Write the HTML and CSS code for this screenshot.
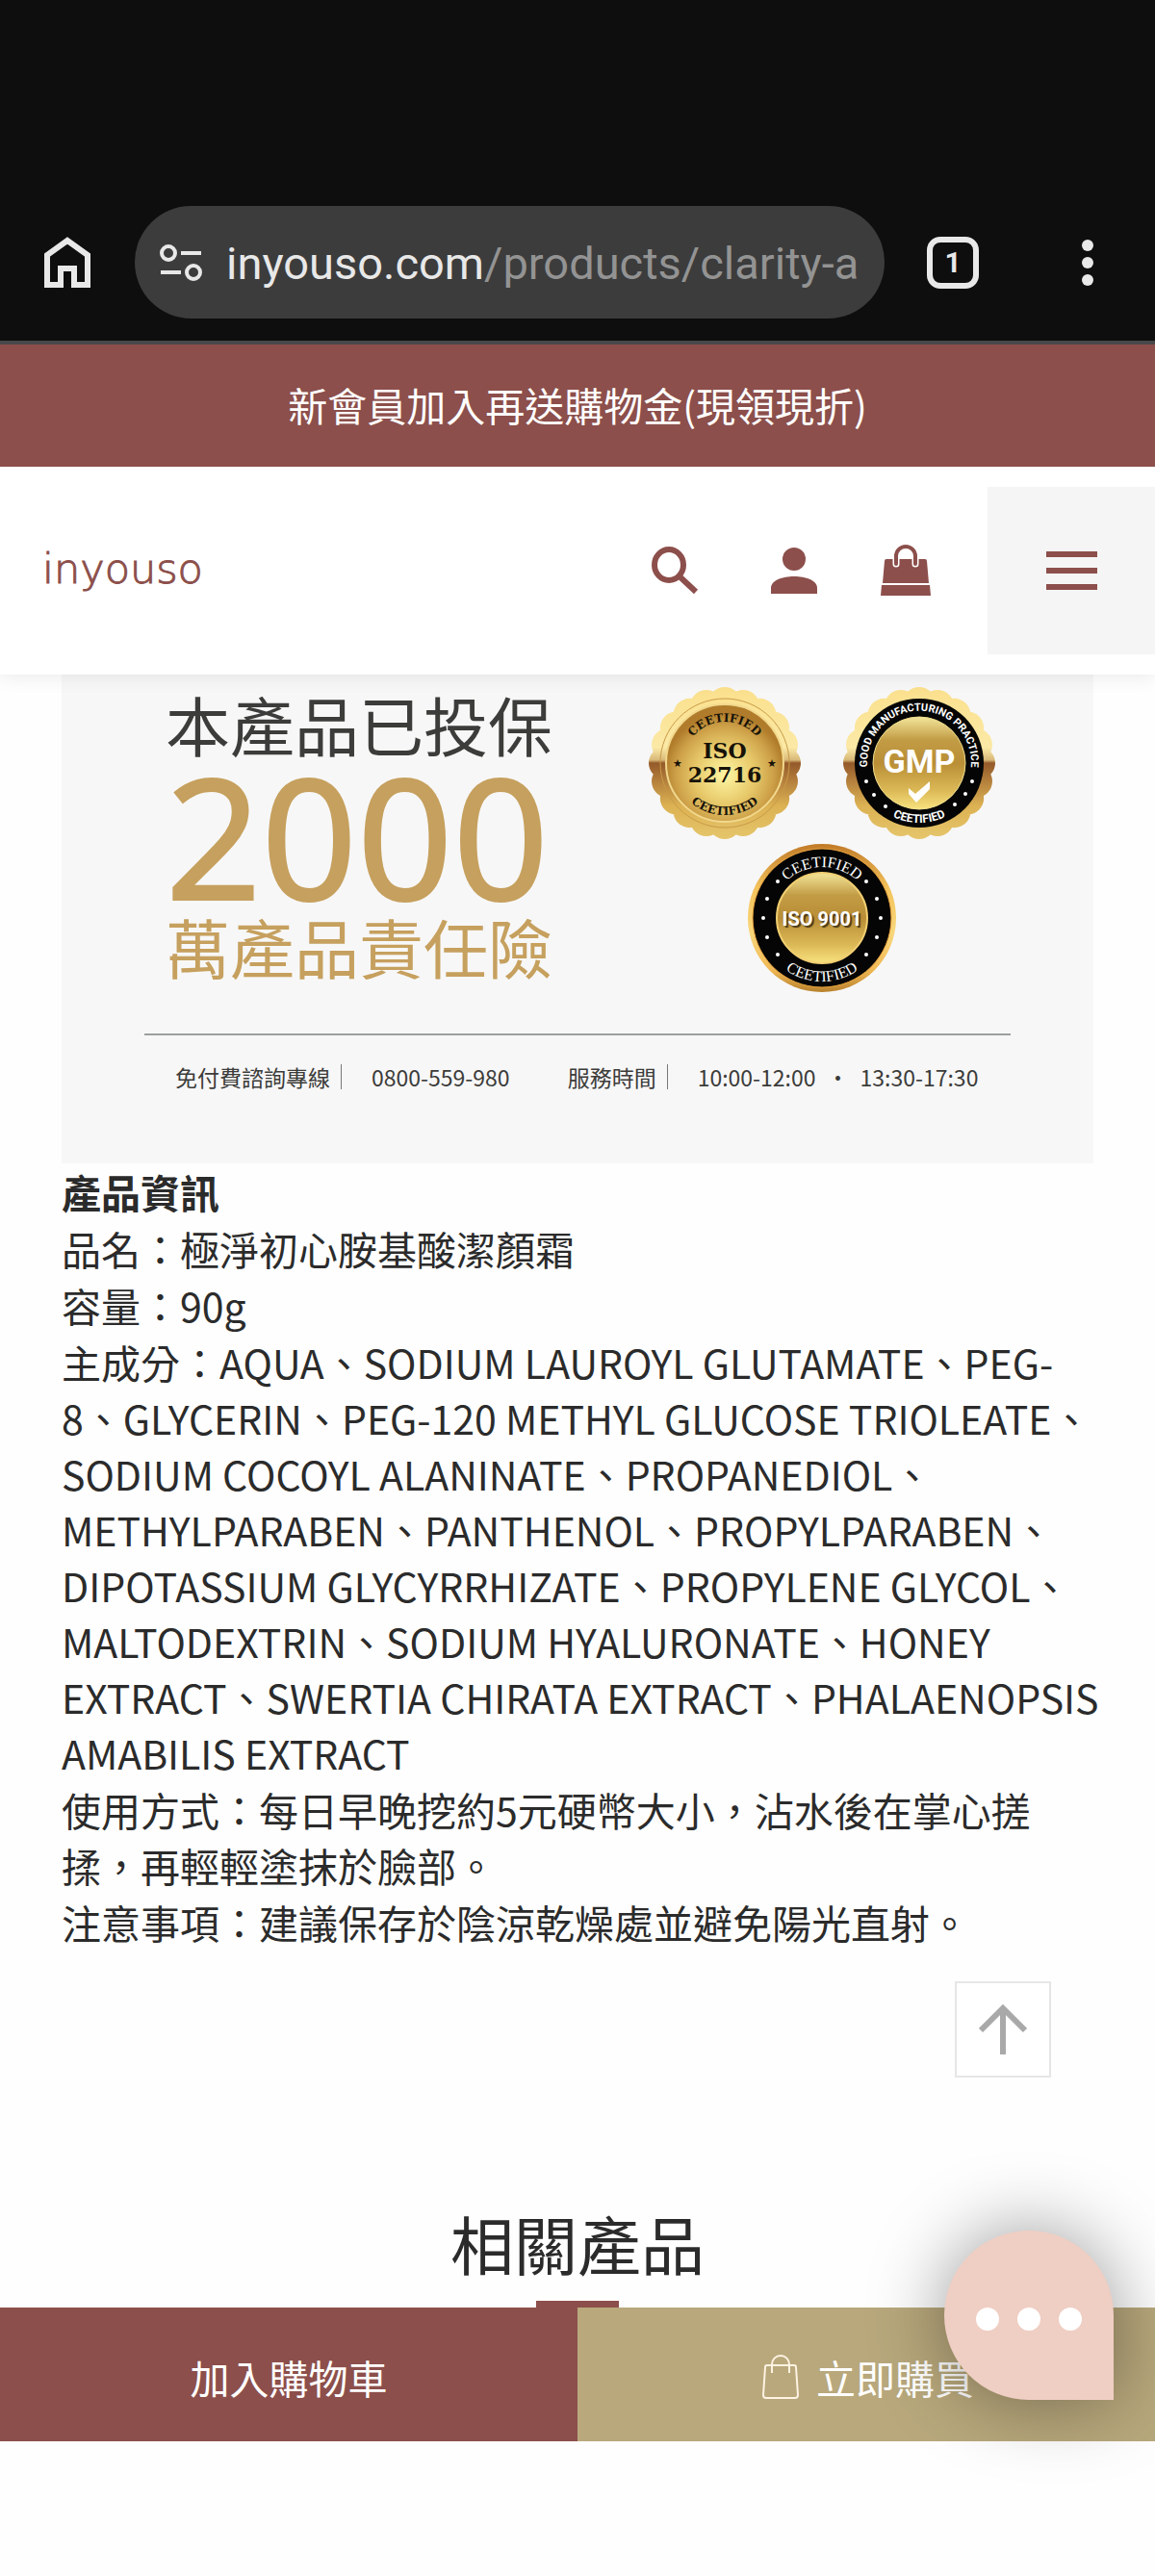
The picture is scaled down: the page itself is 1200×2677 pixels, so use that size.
FILE: index.html
```html
<!DOCTYPE html>
<html lang="zh-Hant">
<head>
  <meta charset="utf-8">
  <meta name="viewport" content="width=device-width, initial-scale=1">
  <title>極淨初心胺基酸潔顏霜 - inyouso</title>
  <link rel="stylesheet" href="styles.css">
</head>
<body>
  <div class="browser-bar">
    <button class="browser-button" aria-label="Home">
      <svg width="48" height="54" viewBox="0 0 48 54"><path d="M3 50V19L24 4l21 15v31H31V33H17v17z" fill="none" stroke="#e8e8e8" stroke-width="6"/></svg>
    </button>
    <div class="url-box">
      <svg width="44" height="38" viewBox="0 0 44 38" fill="none" stroke="#e8e8e8" stroke-width="4"><circle cx="9" cy="9" r="7"/><path d="M22 9h21M1 29h21"/><circle cx="35" cy="29" r="7"/></svg>
      <span class="url">inyouso.com<span class="url-path">/products/clarity-a</span></span>
    </div>
    <button class="tab-count">1</button>
    <button class="browser-button browser-menu" aria-label="More">
      <svg width="14" height="50" viewBox="0 0 14 50" fill="#e8e8e8"><circle cx="7" cy="7" r="6"/><circle cx="7" cy="25" r="6"/><circle cx="7" cy="43" r="6"/></svg>
    </button>
  </div>

  <div class="announcement">新會員加入再送購物金(現領現折)</div>

  <header class="header">
    <a class="logo" href="#">inyouso</a>
    <button class="icon-button search" aria-label="搜尋">
      <svg width="50" height="52" viewBox="0 0 50 52" fill="none" stroke="#8c4f4b"><ellipse cx="19" cy="20" rx="15" ry="16" stroke-width="6"/><path d="M31 33l16 15" stroke-width="6"/></svg>
    </button>
    <button class="icon-button" aria-label="會員">
      <svg width="50" height="52" viewBox="0 0 50 52" fill="#8c4f4b"><ellipse cx="25" cy="14" rx="12" ry="12"/><path d="M1 50V44C1 36 13 32 25 32s24 4 24 12v6z"/></svg>
    </button>
    <button class="icon-button" aria-label="購物車">
      <svg width="54" height="54" viewBox="0 0 54 54"><path d="M5 17q0-2 2-2h40q2 0 2 2l2 23H3zM2 42h50l1 11H1z" fill="#8c4f4b"/><path d="M17 20V13a10 10 0 0 1 20 0v7" fill="none" stroke="#fff" stroke-width="7" stroke-linecap="round"/><path d="M17 20V12a10 10 0 0 1 20 0v8" fill="none" stroke="#8c4f4b" stroke-width="4" stroke-linecap="round"/></svg>
    </button>
    <button class="menu-button" aria-label="選單">
      <span class="menu-line"></span>
      <span class="menu-line"></span>
      <span class="menu-line"></span>
    </button>
  </header>

  <main class="product">
    <section class="insurance">
      <div class="insurance-top">
        <div class="insurance-text">
          <p class="insurance-title">本產品已投保</p>
          <p class="insurance-amount">2000</p>
          <p class="insurance-title gold">萬產品責任險</p>
        </div>
        <div class="badges">
          <svg width="160" height="160" viewBox="0 0 160 160">
            <defs>
              <linearGradient id="rim" gradientUnits="userSpaceOnUse" x1="0" y1="0" x2="0" y2="160">
                <stop offset="0" stop-color="#fbe08c"/><stop offset=".4" stop-color="#fbe9a6"/><stop offset=".48" stop-color="#d8b878"/><stop offset=".5" stop-color="#94592a"/><stop offset=".62" stop-color="#b5813d"/><stop offset=".78" stop-color="#dcb253"/><stop offset="1" stop-color="#e6c66c"/>
              </linearGradient>
              <radialGradient id="face" cx=".5" cy=".6" r=".52">
                <stop offset="0" stop-color="#fff7a4"/><stop offset=".5" stop-color="#e6c768"/><stop offset=".8" stop-color="#cda048"/><stop offset="1" stop-color="#b07c2b"/>
              </radialGradient>
              <linearGradient id="disc" x1="0" y1="0" x2="0" y2="1">
                <stop offset="0" stop-color="#f3e59a"/><stop offset=".25" stop-color="#c29c45"/><stop offset=".5" stop-color="#b98e36"/><stop offset=".8" stop-color="#dcb957"/><stop offset="1" stop-color="#f8e37f"/>
              </linearGradient>
              <linearGradient id="ring" x1="0" y1="0" x2="0" y2="1">
                <stop offset="0" stop-color="#c17a27"/><stop offset=".3" stop-color="#f4c35c"/><stop offset=".6" stop-color="#f8d77c"/><stop offset=".85" stop-color="#f0b854"/><stop offset="1" stop-color="#b8812d"/>
              </linearGradient>
              <path id="iso-top" d="M37 80a43 43 0 0 1 86 0"/>
              <path id="iso-bottom" d="M26 80a54 54 0 0 0 108 0"/>
              <path id="gmp-top" d="M30 100a54 54 0 1 1 100 0"/>
              <path id="gmp-bottom" d="M18 80a62 62 0 0 0 124 0"/>
              <path id="nine-top" d="M24 79a54 54 0 0 1 108 0"/>
              <path id="nine-bottom" d="M13 79a65 65 0 0 0 130 0"/>
            </defs>
            <circle cx="80" cy="80" r="62" fill="none" stroke="url(#rim)" stroke-width="34" stroke-linecap="round" pathLength="20" stroke-dasharray="0 1"/>
            <circle cx="80" cy="80" r="67" fill="none" stroke="#c99b46" stroke-width="1"/>
            <circle cx="80" cy="80" r="61" fill="url(#face)" stroke="#f1d88d" stroke-width="2"/>
            <g class="badge-dark">
              <text class="slab"><textPath href="#iso-top" startOffset="50%">CEETIFIED</textPath></text>
              <text class="badge-iso" x="80" y="75">ISO</text>
              <text class="badge-iso" x="80" y="100">22716</text>
              <text class="slab"><textPath href="#iso-bottom" startOffset="50%">CEETIFIED</textPath></text>
              <text class="badge-star" x="31" y="84">★</text>
              <text class="badge-star" x="129" y="84">★</text>
            </g>
          </svg>
          <svg width="160" height="160" viewBox="0 0 160 160">
            <circle cx="80" cy="80" r="62" fill="none" stroke="url(#rim)" stroke-width="34" stroke-linecap="round" pathLength="20" stroke-dasharray="0 1"/>
            <circle cx="80" cy="80" r="67" fill="#050505"/>
            <circle cx="80" cy="80" r="48" fill="url(#disc)" stroke="#f3e08f" stroke-width="1"/>
            <g class="badge-light">
              <text class="narrow small"><textPath href="#gmp-top" startOffset="50%">GOOD MANUFACTURING PRACTICE</textPath></text>
              <text class="badge-gmp" x="80" y="90">GMP</text>
              <text class="narrow"><textPath href="#gmp-bottom" startOffset="50%">CEETIFIED</textPath></text>
              <path d="M69 106l7 6 15-13v8l-14 14-8-9z"/>
              <circle cx="25" cy="99" r="2"/><circle cx="33" cy="113" r="2"/><circle cx="45" cy="125" r="2"/>
              <circle cx="135" cy="99" r="2"/><circle cx="128" cy="112" r="2"/><circle cx="117" cy="123" r="2"/>
            </g>
          </svg>
          <svg width="156" height="156" viewBox="0 0 156 156">
            <circle cx="78" cy="78" r="77" fill="url(#ring)"/>
            <circle cx="78" cy="78" r="72" fill="#050505" stroke="#e9a23d" stroke-width="1"/>
            <circle cx="78" cy="78" r="47" fill="url(#disc)" stroke="#f1cf72" stroke-width="2"/>
            <g class="badge-light">
              <text class="serif"><textPath href="#nine-top" startOffset="50%">CEETIFIED</textPath></text>
              <text class="serif"><textPath href="#nine-bottom" startOffset="50%">CEETIFIED</textPath></text>
              <text class="badge-nine" x="78" y="86">ISO 9001</text>
              <circle cx="32" cy="40" r="2"/><circle cx="21" cy="58" r="2"/><circle cx="17" cy="78" r="2"/><circle cx="21" cy="98" r="2"/><circle cx="32" cy="116" r="2"/>
              <circle cx="124" cy="40" r="2"/><circle cx="135" cy="58" r="2"/><circle cx="139" cy="78" r="2"/><circle cx="135" cy="98" r="2"/><circle cx="124" cy="116" r="2"/>
            </g>
          </svg>
        </div>
      </div>
      <div class="service">
        <span class="service-label">免付費諮詢專線</span>
        <span class="service-phone">0800-559-980</span>
        <span class="service-label">服務時間</span>
        <span>10:00-12:00</span>
        <span class="service-dot">·</span>
        <span>13:30-17:30</span>
      </div>
    </section>

    <section class="info">
      <p><strong>產品資訊</strong></p>
      <p>品名：極淨初心胺基酸潔顏霜</p>
      <p>容量：90g</p>
      <p>主成分：AQUA、SODIUM LAUROYL GLUTAMATE、PEG-8、GLYCERIN、PEG-120 METHYL GLUCOSE TRIOLEATE、SODIUM COCOYL ALANINATE、PROPANEDIOL、METHYLPARABEN、PANTHENOL、PROPYLPARABEN、DIPOTASSIUM GLYCYRRHIZATE、PROPYLENE GLYCOL、MALTODEXTRIN、SODIUM HYALURONATE、HONEY EXTRACT、SWERTIA CHIRATA EXTRACT、PHALAENOPSIS AMABILIS EXTRACT</p>
      <p>使用方式：每日早晚挖約5元硬幣大小，沾水後在掌心搓揉，再輕輕塗抹於臉部。</p>
      <p>注意事項：建議保存於陰涼乾燥處並避免陽光直射。</p>
    </section>

    <button class="back-top" aria-label="回到頂端">
      <svg width="50" height="52" viewBox="0 0 50 52" fill="none" stroke="#a9a9a9" stroke-width="6"><path d="M25 52V5M2 27L25 4l23 23"/></svg>
    </button>
  </main>

  <h2 class="related-title">相關產品</h2>

  <div class="buy-bar">
    <button class="buy-button cart">加入購物車</button>
    <button class="buy-button now">
      <svg width="38" height="48" viewBox="0 0 38 48" fill="none" stroke="#fff3e2" stroke-width="2"><path d="M5 12h28q2 0 2 2l2 29q0 3-3 3H4q-3 0-3-3l2-29q0-2 2-2zM10 20V11a9 9 0 0 1 18 0v9"/></svg>
      立即購買
    </button>
    <button class="chat" aria-label="聊天">
      <span class="chat-dot"></span>
      <span class="chat-dot"></span>
      <span class="chat-dot"></span>
    </button>
  </div>
</body>
</html>
```
FILE: styles.css
```css
* {
  box-sizing: border-box;
}
body {
  margin: 0;
  background-color: #fefefe;
  color: #2b2b2b;
  font-family: "Noto Sans CJK TC", sans-serif;
  font-size: 41px;
}
p, h2 {
  margin: 0;
}
button {
  padding: 0;
  border: 0;
  background: none;
  font: inherit;
  cursor: pointer;
}
svg {
  display: block;
}

/* browser */
.browser-bar {
  display: flex;
  align-items: center;
  padding: 214px 63px 23px 46px;
  background-color: #0e0e0e;
  border-bottom: 4px solid #48484b;
}
.browser-button {
  display: flex;
}
.url-box {
  flex: 1;
  display: flex;
  align-items: center;
  gap: 25px;
  height: 117px;
  margin: 0 44px 0 46px;
  padding-left: 26px;
  border-radius: 59px;
  background-color: #3c3c3c;
  overflow: hidden;
}
.url {
  padding-top: 2px;
  color: #e8e8e8;
  font-family: Roboto, sans-serif;
  font-size: 47px;
  white-space: nowrap;
}
.url-path {
  color: #939393;
}
.tab-count {
  width: 54px;
  height: 54px;
  border: 6px solid #e8e8e8;
  border-radius: 14px;
  color: #e8e8e8;
  font-family: Roboto, sans-serif;
  font-size: 30px;
  font-weight: bold;
  line-height: 40px;
}
.browser-menu {
  margin-left: 106px;
}

.announcement {
  position: relative;
  z-index: 1;
  padding-bottom: 3px;
  background-color: #8c4f4b;
  color: #fff;
  line-height: 124px;
  text-align: center;
}

/* header */
.header {
  position: relative;
  display: flex;
  align-items: center;
  height: 216px;
  background-color: #fff;
  box-shadow: 0 0 20px rgba(0, 0, 0, 0.1);
}
.logo {
  margin-right: auto;
  padding: 0 0 4px 44px;
  color: #8c4f4b;
  font-family: "DejaVu Sans", sans-serif;
  font-size: 43px;
  font-weight: 200;
  text-decoration: none;
  -webkit-text-stroke: 1px #8c4f4b;
}
.icon-button {
  margin-left: 64px;
}
.search {
  margin-right: 10px;
}
.menu-button {
  display: flex;
  flex-direction: column;
  align-items: center;
  justify-content: center;
  gap: 11px;
  width: 174px;
  height: 174px;
  margin-left: 58px;
  background-color: #f5f5f5;
}
.menu-line {
  width: 53px;
  height: 6px;
  background-color: #8c4f4b;
}

/* product */
.product {
  padding: 0 64px;
}
.insurance {
  height: 508px;
  padding: 8px 86px 0;
  background-color: #f7f7f7;
}
.insurance-top {
  display: flex;
  justify-content: space-between;
  height: 367px;
  padding: 0 14px 0 22px;
  border-bottom: 2px solid #9c9f9d;
}
.insurance-title {
  color: #3c3c3a;
  font-size: 67px;
  line-height: 86px;
}
.insurance-amount {
  color: #c6a05e;
  font-family: "Noto Sans", sans-serif;
  font-size: 174px;
  line-height: 145px;
  -webkit-text-stroke: 2px #c6a05e;
}
.gold {
  color: #c6a05e;
}
.badges {
  display: flex;
  flex-wrap: wrap;
  justify-content: center;
  align-content: flex-start;
  gap: 3px 42px;
  width: 364px;
  padding-top: 4px;
}
.badge-dark {
  fill: #171208;
}
.badge-light {
  fill: #fff;
}
.badges text {
  text-anchor: middle;
}
.slab {
  font: bold 12px "DejaVu Serif", serif;
}
.narrow {
  font: bold 12px Roboto, sans-serif;
}
.small {
  font-size: 11px;
}
.serif {
  font: 16px "Liberation Serif", serif;
}
.badge-iso {
  font: bold 22px "DejaVu Serif", serif;
}
.badge-star {
  font: 11px "DejaVu Sans", sans-serif;
}
.badge-gmp {
  font: bold 34px Roboto, sans-serif;
}
.badge-nine {
  font: bold 20px Roboto, sans-serif;
  text-shadow: 2px 2px 1px #4a3a1a;
}
.service {
  display: flex;
  align-items: center;
  margin: 26px 0 0 32px;
  color: #3c3c3a;
  font-size: 23px;
  line-height: 34px;
  white-space: nowrap;
}
.service-label {
  margin-right: 31px;
  padding-right: 11px;
  border-right: 1px solid #777;
  line-height: 26px;
}
.service-phone {
  margin-right: 60px;
}
.service-dot {
  width: 46px;
  text-align: center;
}

.info {
  margin-right: -12px;
  line-height: 58px;
}
.info p + p {
  margin-top: 1px;
}

.back-top {
  display: flex;
  align-items: center;
  justify-content: center;
  width: 100px;
  height: 100px;
  margin: 33px 44px 0 auto;
  border: 2px solid #e6e6e6;
  background-color: #fff;
}

.related-title {
  margin-top: 124px;
  font-size: 66px;
  font-weight: 400;
  line-height: 94px;
  text-align: center;
}
.related-title::after {
  content: "";
  display: block;
  width: 86px;
  height: 7px;
  margin: 14px auto 0;
  background-color: #8c4f4b;
}

/* bottom bar */
.buy-bar {
  position: relative;
  display: flex;
  height: 139px;
  margin-bottom: 140px;
}
.buy-button {
  width: 50%;
  display: flex;
  align-items: center;
  justify-content: center;
  gap: 18px;
  padding-top: 4px;
  color: #fff;
}
.cart {
  background-color: #8c4f4b;
}
.now {
  padding-left: 4px;
  background-color: #b8a87c;
}
.chat {
  position: absolute;
  right: 43px;
  bottom: 43px;
  display: flex;
  align-items: center;
  justify-content: center;
  gap: 19px;
  width: 176px;
  height: 176px;
  padding-top: 8px;
  border-radius: 50% 50% 0 50%;
  background-color: #efcec3;
  box-shadow: 0 0 80px rgba(0, 0, 0, 0.4);
}
.chat-dot {
  width: 24px;
  height: 24px;
  border-radius: 50%;
  background-color: #fff;
}
```
